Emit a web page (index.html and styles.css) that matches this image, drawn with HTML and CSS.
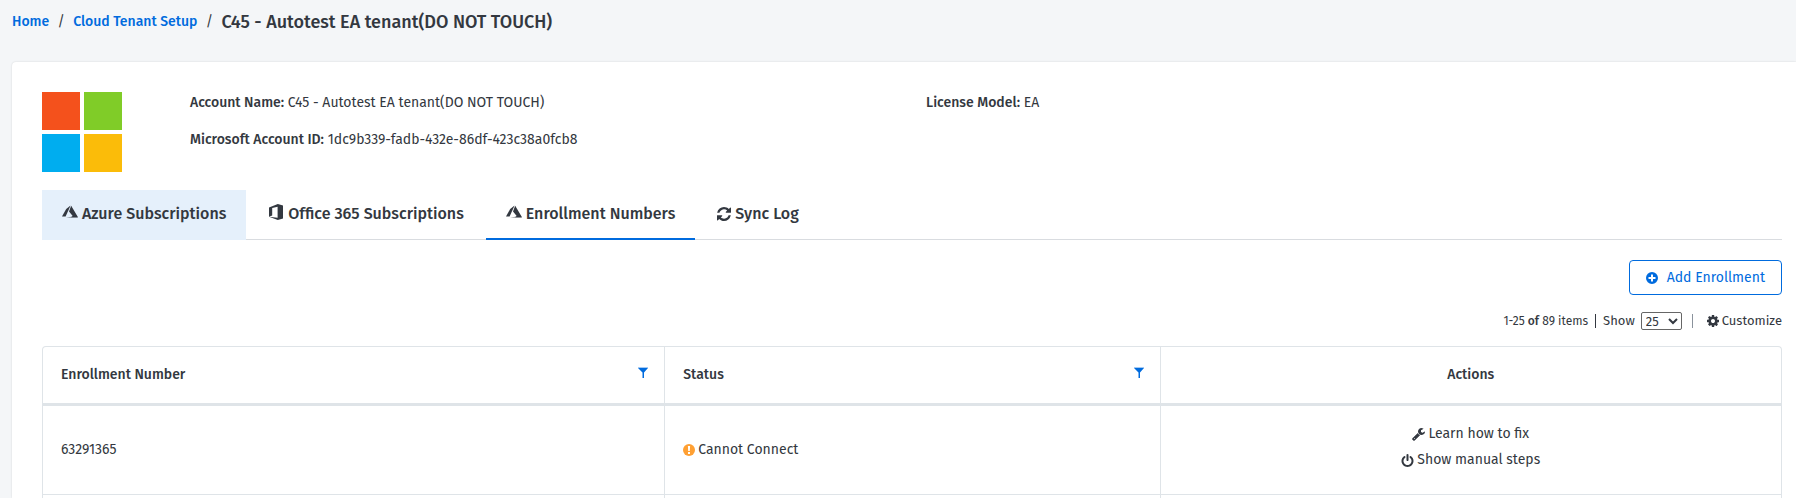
FILE: index.html
```html
<!DOCTYPE html>
<html lang="en">
<head>
<meta charset="utf-8">
<title>Cloud Tenant Setup</title>
<link rel="stylesheet" href="styles.css">
</head>
<body>
<svg class="sprite" aria-hidden="true">
  <symbol id="azure" viewBox="0 0 16 14"><path d="M8.600.4 4.200 4 0 11.400h3.600z"/><path d="M9.200.8 7 6.400l3.700 4.600L9 12.200h7z"/><path opacity=".4" d="M10.700 11.200 4 13H16L14 10z"/></symbol>
  <symbol id="office" viewBox="0 0 14 16"><path d="M0 3.400 8.800 0 14 1.500v13l-5.200 1.500L0 12.700l8.600 1V2.700L3.200 4v7.400L0 12.700z"/></symbol>
  <symbol id="sync" viewBox="0 0 1536 1536"><path d="M1511 928q0 5-1 7-64 268-268 434.500T764 1536q-146 0-282.500-55T238 1324l-129 129q-19 19-45 19t-45-19-19-45V960q0-26 19-45t45-19h448q26 0 45 19t19 45-19 45l-137 137q71 66 161 102t187 36q134 0 250-65t186-179q11-17 53-117 8-23 30-23h192q13 0 22.500 9.500t9.500 22.500zm25-800v448q0 26-19 45t-45 19h-448q-26 0-45-19t-19-45 19-45l138-138Q969 256 768 256q-134 0-250 65T332 500q-11 17-53 117-8 23-30 23H50q-13 0-22.500-9.500T18 608v-7q65-268 270-434.500T768 0q146 0 284 55.500T1297 212l130-129q19-19 45-19t45 19 19 45z"/></symbol>
  <symbol id="plus" viewBox="0 0 12 12"><path fill-rule="evenodd" d="M6 0a6 6 0 1 1 0 12A6 6 0 0 1 6 0zM5 2.500V5H2.500v2H5v2.500h2V7h2.500V5H7V2.500z"/></symbol>
  <symbol id="gear" viewBox="0 0 1536 1536"><path d="M1024 768q0-106-75-181t-181-75-181 75-75 181 75 181 181 75 181-75 75-181zm512-109v222q0 12-8 23t-20 13l-185 28q-19 54-39 91 35 50 107 138 10 12 10 25t-9 23q-27 37-99 108t-94 71q-12 0-26-9l-138-108q-44 23-91 38-16 136-29 186-7 28-36 28H657q-14 0-24.500-8.500T621 1506l-28-184q-49-16-90-37l-141 107q-10 9-25 9-14 0-25-11-126-114-165-168-7-10-7-23 0-12 8-23 15-21 51-66.500t54-70.500q-27-50-41-99L29 913q-13-2-21-12.500T0 877V655q0-12 8-23t19-13l186-28q14-46 39-92-40-57-107-138-10-12-10-24 0-10 9-23 26-36 98.500-107.500T337 135q13 0 26 10l138 107q44-23 91-38 16-136 29-186 7-28 36-28h222q14 0 24.500 8.500T915 30l28 184q49 16 90 37l142-107q9-9 24-9 13 0 25 10 129 119 165 170 7 8 7 22 0 12-8 23-15 21-51 66.500t-54 70.500q26 50 41 98l183 28q13 2 21 12.500t8 23.500z"/></symbol>
  <symbol id="filter" viewBox="0 0 10 12"><path opacity=".35" d="M0 0h10v1H0z"/><path d="M0 1h10L6 5.500V11H4.500V5.500z"/></symbol>
  <symbol id="warn" viewBox="0 0 12 12"><circle cx="6" cy="6" r="6"/><path fill="#fff" d="M4.900 2h2.200l-.3 5H5.200zM5 7.900h2v2H5z"/></symbol>
  <symbol id="wrench" viewBox="0 0 1664 1664"><path d="M384 1344q0-26-19-45t-45-19-45 19-19 45 19 45 45 19 45-19 19-45zm644-420l-682 682q-37 37-90 37-52 0-91-37L59 1498q-38-36-38-90 0-53 38-91l681-681q39 98 114.500 173.500T1028 924zm634-435q0 39-23 106-47 134-164.500 217.500T1216 896q-185 0-316.500-131.500T768 448t131.500-316.500T1216 0q58 0 121.500 16.500T1445 63q16 11 16 28t-16 28l-293 169v224l193 107q5-3 79-48.500t135.500-81T1630 454q15 0 23.500 10t8.500 25z"/></symbol>
  <symbol id="power" viewBox="0 0 1536 1664"><path d="M1536 896q0 156-61 298t-164 245-245 164-298 61-298-61-245-164-164-245T0 896q0-182 80.500-343T307 283q43-32 95.500-25t83.500 50q32 42 24.500 94.500T461 487q-98 74-151.500 181T256 896q0 104 40.500 198.500T406 1258t163.500 109.500T768 1408t198.500-40.500T1130 1258t109.500-163.500T1280 896q0-121-53.500-228T1075 487q-42-32-49.500-84.500T1050 308q31-43 84-50t95 25q146 109 226.500 270t80.500 343zM896 128v640q0 52-38 90t-90 38-90-38-38-90V128q0-52 38-90t90-38 90 38 38 90z"/></symbol>
</svg>
<nav class="breadcrumb" aria-label="Breadcrumb">
  <a href="#">Home</a><span class="slash">/</span><a href="#">Cloud Tenant Setup</a><span class="slash">/</span><h1 class="title">C45 - Autotest EA tenant(DO NOT TOUCH)</h1>
</nav>
<main class="card">
  <section class="account">
    <svg class="logo" viewBox="0 0 80 80" role="img" aria-label="Microsoft"><path fill="#f4511c" d="M0 0h38v38H0z"/><path fill="#80cc28" d="M42 0h38v38H42z"/><path fill="#00adef" d="M0 42h38v38H0z"/><path fill="#fbbc09" d="M42 42h38v38H42z"/></svg>
    <div class="facts">
      <p><b>Account Name:</b> C45 - Autotest EA tenant(DO NOT TOUCH)</p>
      <p><b>Microsoft Account ID:</b> 1dc9b339-fadb-432e-86df-423c38a0fcb8</p>
    </div>
    <div class="facts"><p><b>License Model:</b> EA</p></div>
  </section>
  <nav class="tabs">
    <a class="tab hovered" href="#"><svg class="tab-icon"><use href="#azure"/></svg>Azure Subscriptions</a>
    <a class="tab" href="#"><svg class="tab-icon"><use href="#office"/></svg>Office 365 Subscriptions</a>
    <a class="tab active" href="#"><svg class="tab-icon"><use href="#azure"/></svg>Enrollment Numbers</a>
    <a class="tab" href="#"><svg class="tab-icon sync"><use href="#sync"/></svg>Sync Log</a>
  </nav>
  <div class="toolbar"><button class="add" type="button"><svg class="icon"><use href="#plus"/></svg>Add Enrollment</button></div>
  <div class="pager">
    <span class="count">1-25 <b>of</b> 89 items</span><span class="bar"></span>
    <label for="size">Show</label>
    <select id="size" class="size"><option>25</option><option>50</option></select>
    <span class="bar light"></span>
    <button class="customize" type="button"><svg class="icon"><use href="#gear"/></svg>Customize</button>
  </div>
  <div class="grid">
    <table class="table">
      <colgroup><col class="col-number"><col class="col-status"><col></colgroup>
      <thead><tr>
        <th><div class="head">Enrollment Number<button class="filter" type="button" aria-label="Filter enrollment number"><svg class="funnel"><use href="#filter"/></svg></button></div></th>
        <th><div class="head">Status<button class="filter" type="button" aria-label="Filter status"><svg class="funnel"><use href="#filter"/></svg></button></div></th>
        <th class="center">Actions</th>
      </tr></thead>
      <tbody>
        <tr><td>63291365</td>
        <td><span class="status"><svg class="icon warn"><use href="#warn"/></svg>Cannot Connect</span></td>
        <td><div class="actions"><a href="#"><svg class="action-icon"><use href="#wrench"/></svg>Learn how to fix</a><a href="#"><svg class="action-icon"><use href="#power"/></svg>Show manual steps</a></div></td></tr>
        <tr class="tail"><td></td><td></td><td></td></tr>
      </tbody>
    </table>
  </div>
</main>
</body>
</html>
```
FILE: styles.css
```css
* { box-sizing: border-box; }
body {
  display: flex;
  flex-direction: column;
  min-height: 100vh;
  margin: 0;
  padding-left: 12px;
  background: #f4f6f8;
  color: #333840;
  font: 14px/20px "Fira Sans", Roboto, sans-serif;
}
a { color: inherit; text-decoration: none; }
b, th { font-weight: 500; }
p { margin: 0; }
button { padding: 0; border: 0; background: none; color: inherit; font: inherit; cursor: pointer; }
svg { fill: currentColor; flex: none; }
.sprite { display: none; }
.icon { width: 12px; height: 12px; }
.action-icon { width: 13px; height: 13px; }

.breadcrumb { display: flex; align-items: center; height: 42px; margin-bottom: 20px; padding-top: 2px; }
.breadcrumb a { color: #006bde; font-weight: 500; }
.slash { width: 24px; text-align: center; }
.title { margin: 0; font-size: 18px; font-weight: 500; }

.card {
  display: flex;
  flex-direction: column;
  flex: 1;
  padding: 30px 14px 0 30px;
  background: #fff;
  border-radius: 4px 0 0 0;
  box-shadow: 0 0 2px rgba(0, 0, 0, .15);
}
.account { display: grid; grid-template-columns: 148px 11fr 13fr; margin-bottom: 18px; margin-right: -14px; }
.logo { width: 80px; height: 80px; }
.facts { display: flex; flex-direction: column; gap: 17px; padding-top: 1px; }

.tabs { display: flex; gap: 2px; border-bottom: 1px solid #d9dce0; font-size: 16px; font-weight: 500; }
.tab { display: flex; align-items: center; gap: 4px; height: 50px; margin-bottom: -1px; padding: 0 20px 2px; }
.tab-icon { width: 16px; height: 16px; margin-bottom: 5px; }
.tab-icon.sync { width: 14px; height: 14px; margin-bottom: 0; }
.hovered { background: #e5f0fb; }
.active { border-bottom: 2px solid #006bde; padding-bottom: 0; }

.toolbar { display: flex; justify-content: flex-end; padding: 20px 0 15px; }
.add {
  display: flex;
  align-items: center;
  gap: 9px;
  height: 35px;
  padding: 0 16px;
  border: 1px solid #006bde;
  border-radius: 4px;
  color: #006bde;
}
.pager { display: flex; justify-content: flex-end; align-items: center; height: 22px; margin-bottom: 14px; font-size: 13px; }
.count { font-size: 12px; }
.bar { width: 1px; height: 14px; margin: 0 7px; background: #333840; }
.bar.light { margin: 0 14px 0 10px; background: #8a929c; }
.size { width: 41px; height: 18px; margin-left: 6px; padding: 0; border: 1px solid #666; border-radius: 2px; background: #fff; color: inherit; font: inherit; }
.customize { display: flex; align-items: center; gap: 3px; }

.grid {
  flex: 1;
  border: 1px solid #dfe4e8;
  border-bottom: 0;
  border-radius: 4px 4px 0 0;
  overflow: hidden;
}
.table { width: 100%; border-collapse: separate; border-spacing: 0; table-layout: fixed; }
.col-number { width: 35.8%; }
.col-status { width: 28.5%; }
th, td { padding: 0 18px; border-right: 1px solid #dfe4e8; text-align: left; }
th:last-child, td:last-child { border-right: 0; }
th { height: 59px; border-bottom: 3px solid #dfe4e8; }
td { height: 89px; border-bottom: 1px solid #dfe4e8; }
.tail td { height: 3px; border-bottom: 0; }
th.center { text-align: center; }
.head { display: flex; justify-content: space-between; align-items: center; }
.filter { display: flex; margin: 0 -2px 4px 0; color: #006bde; }
.funnel { width: 10px; height: 12px; }
.status { display: flex; align-items: center; gap: 3px; }
.warn { color: #ffa033; }
.actions { display: flex; flex-direction: column; align-items: center; gap: 6px; padding-bottom: 6px; }
.actions a { display: flex; align-items: center; gap: 3px; }
```
